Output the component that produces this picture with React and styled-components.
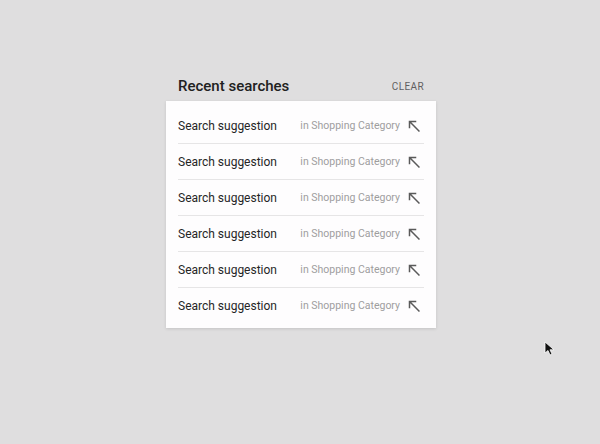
import React from 'react';
import styled, { createGlobalStyle } from 'styled-components';

const GlobalStyle = createGlobalStyle`
  html, body {
    margin: 0;
    padding: 0;
    background: #dfdedf;
    font-family: Roboto, "Liberation Sans", Arial, sans-serif;
  }
`;

const Page = styled.div`
  position: relative;
  width: 600px;
  height: 444px;
  padding-top: 74px;
  box-sizing: border-box;
  display: flex;
  justify-content: center;
`;

const Panel = styled.section`
  width: 270px;
  margin-left: 2px;
`;

const Header = styled.div`
  display: flex;
  align-items: center;
  justify-content: space-between;
  height: 23px;
  padding: 0 12px;
  margin-bottom: 4px;
`;

const Title = styled.h2`
  margin: 0;
  font-size: 15px;
  font-weight: 500;
  color: #212121;
`;

const ClearButton = styled.button`
  border: 0;
  background: none;
  padding: 1px 0 0;
  font-family: inherit;
  font-size: 10px;
  font-weight: 400;
  letter-spacing: 0.4px;
  color: #5f5f5f;
  text-transform: uppercase;
  cursor: pointer;
`;

const Card = styled.ul`
  list-style: none;
  margin: 0;
  padding: 7px 12px 4px;
  background: #fefdfe;
  box-shadow: 0 1px 3px rgba(0, 0, 0, 0.12);
`;

const Row = styled.li`
  display: flex;
  align-items: center;
  height: 36px;
  border-bottom: 1px solid ${p => (p.last ? 'transparent' : '#e6e5e6')};
  box-sizing: border-box;
`;

const Query = styled.span`
  flex: 1;
  font-size: 12px;
  color: #262626;
`;

const Category = styled.span`
  font-size: 10.5px;
  color: #9e9e9e;
  margin-right: 5px;
`;

const Arrow = styled.svg`
  width: 18px;
  height: 18px;
  fill: #5a5a5a;
  margin-right: 1px;
`;

const Cursor = styled.svg`
  position: absolute;
  left: 544px;
  top: 341px;
  width: 12px;
  height: 16px;
`;

const items = Array.from({ length: 6 }, () => ({
  query: 'Search suggestion',
  category: 'in Shopping Category',
}));

export default function App() {
  return (
    <Page>
      <GlobalStyle />
      <Panel>
        <Header>
          <Title>Recent searches</Title>
          <ClearButton>Clear</ClearButton>
        </Header>
        <Card>
          {items.map((it, i) => (
            <Row key={i} last={i === items.length - 1}>
              <Query>{it.query}</Query>
              <Category>{it.category}</Category>
              <Arrow viewBox="0 0 24 24">
                <path d="M5 15h2V8.41L18.59 20 20 18.59 8.41 7H15V5H5z" />
              </Arrow>
            </Row>
          ))}
        </Card>
      </Panel>
      <Cursor viewBox="0 0 12 16">
        <path d="M1 1 L1 12 L4 9.5 L6 14 L8 13 L6 8.8 L10 8.8 Z" fill="#111" stroke="#fff" strokeWidth="0.8" />
      </Cursor>
    </Page>
  );
}
